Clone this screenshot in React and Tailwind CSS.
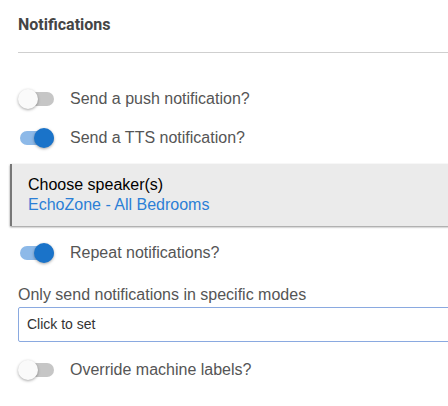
function Toggle({ on }) {
    return (
        <div className="relative w-9 h-5 shrink-0">
            <div className={`absolute left-[2px] right-0 top-[3px] h-[14px] rounded-full ${on ? 'bg-[#8db9e8]' : 'bg-[#c6c6c6]'}`} />
            <div
                className={`absolute top-0 w-5 h-5 rounded-full shadow-[0_1px_3px_rgba(0,0,0,0.35)] ${on ? 'left-4 bg-[#1a73c9]' : 'left-0 bg-[#fafafa]'}`}
            />
        </div>
    );
}

function ToggleRow({ on, label, className = '' }) {
    return (
        <div className={`flex items-center h-[39px] ${className}`}>
            <Toggle on={on} />
            <span className="ml-[16px] text-[16px] leading-5 text-[#555]">{label}</span>
        </div>
    );
}

export default function App() {
    return (
        <div className="w-[448px] h-[406px] overflow-hidden bg-white font-['Liberation_Sans',Arial,sans-serif]">
            <div className="w-[640px] pl-[18px]">
                <div className="pt-[13px] pb-[15px] border-b border-[#cfcfcf]">
                    <h2 className="font-['Roboto',sans-serif] font-bold text-[16px] leading-6 text-[#454545]">Notifications</h2>
                </div>

                <ToggleRow on={false} label="Send a push notification?" className="mt-[26px]" />
                <ToggleRow on={true} label="Send a TTS notification?" />

                <div className="-ml-2 mt-[7px] bg-[#ebebeb] border-l-2 border-[#777] shadow-[0_1px_2px_rgba(0,0,0,0.45)] pl-[16px] py-[11px]">
                    <div className="text-[16px] leading-5 text-black">Choose speaker(s)</div>
                    <div className="text-[16px] leading-5 text-[#2b7fd6]">EchoZone - All Bedrooms</div>
                </div>

                <ToggleRow on={true} label="Repeat notifications?" className="mt-[7px]" />

                <div className="mt-[13px] text-[16px] leading-5 text-[#555]">Only send notifications in specific modes</div>
                <div className="mt-[2px] h-[35px] border border-[#8aa9e0] rounded-[2px] flex items-center pl-[8px] text-[14px] text-[#333]">
                    Click to set
                </div>

                <ToggleRow on={false} label="Override machine labels?" className="mt-[8px]" />
            </div>
        </div>
    );
}
